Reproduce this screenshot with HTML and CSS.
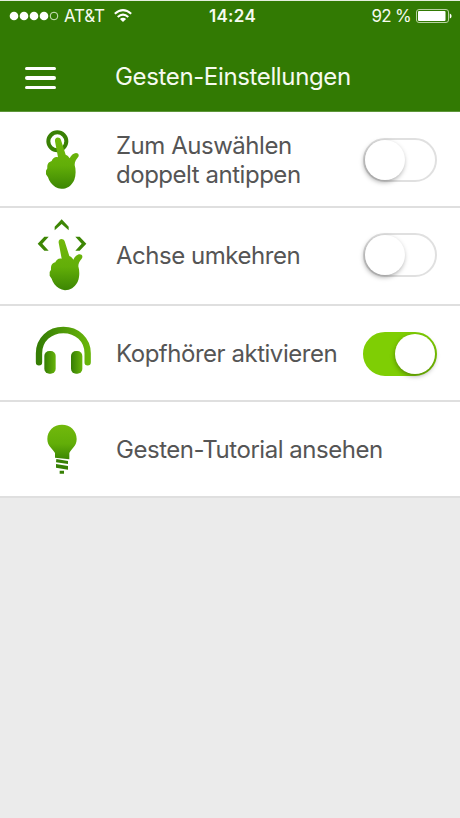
FILE: index.html
```html
<!DOCTYPE html>
<html lang="de">
<head>
<meta charset="UTF-8">
<meta name="viewport" content="width=device-width, initial-scale=1.0">
<title>Gesten-Einstellungen</title>
<link rel="stylesheet" href="styles.css">
</head>
<body>
<header>
    <div class="status-bar">
        <div class="carrier">
            <svg width="50" height="12" viewBox="0 0 50 12" fill="#fff">
                <circle cx="5" cy="6" r="4.3"/>
                <circle cx="15" cy="6" r="4.3"/>
                <circle cx="25" cy="6" r="4.3"/>
                <circle cx="35" cy="6" r="4.3"/>
                <circle cx="45" cy="6" r="3.8" fill="none" stroke="#e4f0d8" stroke-width=".9"/>
            </svg>
            <span>AT&amp;T</span>
            <svg class="wifi" width="18" height="14" viewBox="0 0 18 14" fill="none" stroke="#fff" stroke-width="2">
                <path d="M.8 4.8Q9-2.6 17.2 4.8M3.7 8Q9 3.2 14.3 8"/>
                <path d="M9 13L5.9 9.9Q9 7.5 12.1 9.9Z" fill="#fff" stroke="none"/>
            </svg>
        </div>
        <div class="time">14:24</div>
        <div class="battery">
            <span>92 %</span>
            <svg width="36" height="14" viewBox="0 0 36 14">
                <rect x=".5" y=".5" width="32" height="13" rx="2.5" fill="none" stroke="#b9d3a2"/>
                <rect x="2" y="2" width="27.5" height="10" rx="1" fill="#fff"/>
                <path d="M33.8 4.5Q35.6 5 35.6 7T33.8 9.5Z" fill="#fff"/>
            </svg>
        </div>
    </div>
    <div class="nav-bar">
        <div class="menu"><i></i><i></i><i></i></div>
        <h1>Gesten-Einstellungen</h1>
    </div>
</header>

<ul class="settings">
    <li>
        <svg class="icon" viewBox="0 -9 270 285">
            <defs>
                <linearGradient id="handFill" x1="0" y1="0" x2="0" y2="1">
                    <stop offset="0" stop-color="#72b90c"/>
                    <stop offset=".55" stop-color="#62ae08"/>
                    <stop offset="1" stop-color="#3c8603"/>
                </linearGradient>
                <linearGradient id="sideFill" x1="0" y1="0" x2="1" y2="0">
                    <stop offset="0" stop-color="#357d04"/>
                    <stop offset="1" stop-color="#67b40a"/>
                </linearGradient>
                <path id="hand" d="M105 79C103 66 119 64 123 75L137 119C144 122 147 127 149 130C153 121 161 114 168 114C177 115 178 122 174 127C168 134 164 141 164 150C168 163 168 181 163 194C157 208 145 220 130 221Q116 223 106 216C96 209 87 199 84 187L78 178L78 167L82 160C81 146 86 141 95 138C97 130 106 124 114 127Z"/>
            </defs>
            <circle cx="112" cy="79" r="27" fill="none" stroke="#398004" stroke-width="12"/>
            <use href="#hand" fill="url(#handFill)"/>
        </svg>
        <span class="label">Zum Auswählen<br>doppelt antippen</span>
        <span class="toggle"></span>
    </li>
    <li class="axis">
        <svg class="icon" viewBox="0 -6 270 285">
            <g fill="#3d8604">
                <path d="M125 28L146 50V61L125 42L104 61V50Z"/>
                <path d="M53 101L73 80H86L67 101L86 122H73Z"/>
                <path d="M199 101L179 80H166L185 101L166 122H179Z"/>
            </g>
            <use href="#hand" x="11" y="19" fill="url(#handFill)"/>
        </svg>
        <span class="label">Achse umkehren</span>
        <span class="toggle"></span>
    </li>
    <li>
        <svg class="icon" viewBox="0 -13 270 285">
            <path d="M57 156V129C57 88 89 59 130 59S203 88 203 129V156" fill="none" stroke="url(#sideFill)" stroke-width="19" stroke-linecap="round"/>
            <rect x="73" y="122" width="34" height="68" rx="15" fill="url(#sideFill)"/>
            <rect x="153" y="122" width="34" height="68" rx="15" fill="url(#sideFill)"/>
        </svg>
        <span class="label">Kopfhörer aktivieren</span>
        <span class="toggle on"></span>
    </li>
    <li>
        <svg class="icon" viewBox="0 -24 270 285">
            <path d="M105 143V129C98 116 82 109 82 87C82 62 101 44 126 44S170 62 170 87C170 109 154 116 148 129V148Z" fill="url(#handFill)"/>
            <path d="M109 147L144 153V162L108 157ZM108 162L144 168V179L108 173ZM119 182H132V191H119Z" fill="#378005"/>
        </svg>
        <span class="label">Gesten-Tutorial ansehen</span>
    </li>
</ul>
</body>
</html>
```
FILE: styles.css
```css
* {
    box-sizing: border-box;
}

body {
    margin: 0;
    min-height: 818px;
    background: #ebebeb;
    font-family: Inter, "Liberation Sans", sans-serif;
    color: #555;
}

header {
    height: 112px;
    background: #327a03;
    border-top: 1px solid #e5eedd;
    border-bottom: 1px solid #5d963a;
    color: #f6fbf0;
}

.status-bar {
    display: grid;
    grid-template-columns: 1fr auto 1fr;
    align-items: center;
    height: 30px;
    padding: 0 8px 0 9px;
    font-size: 17px;
    line-height: 30px;
}

.carrier,
.battery {
    display: flex;
    align-items: center;
}

.carrier span {
    margin-left: 5px;
    letter-spacing: -0.2px;
}

.wifi {
    margin-left: 9px;
}

.time {
    padding-left: 4px;
    font-weight: 600;
    letter-spacing: 0.3px;
}

.battery {
    justify-content: flex-end;
    gap: 5px;
}

.battery span {
    letter-spacing: -0.7px;
}

.nav-bar {
    display: flex;
    align-items: center;
    height: 80px;
    padding: 11px 0 0 25px;
}

.menu {
    display: flex;
    flex-direction: column;
    gap: 6px;
    width: 31px;
    margin: 3px 59px 0 0;
}

.menu i {
    height: 3.6px;
    border-radius: 2px;
    background: #fff;
}

h1 {
    margin: 0;
    font-size: 24px;
    font-weight: 400;
    line-height: 30px;
    letter-spacing: -0.36px;
    white-space: nowrap;
}

.settings {
    margin: 0;
    padding: 0;
    list-style: none;
    background: #fff;
}

.settings li {
    display: flex;
    align-items: center;
    height: 96px;
    padding: 1px 23px 0 20px;
    border-bottom: 2px solid #dfdfdf;
}

.settings .axis {
    height: 98px;
    padding-top: 0;
    padding-bottom: 2px;
}

.icon {
    flex: none;
    width: 90px;
    height: 95px;
}

.label {
    margin-left: 6px;
    font-size: 24px;
    line-height: 29px;
    letter-spacing: -0.47px;
    white-space: nowrap;
}

.toggle {
    flex: none;
    display: flex;
    width: 74px;
    height: 44px;
    margin-left: auto;
    border: 2px solid #e0e0e0;
    border-radius: 22px;
}

.toggle::before {
    content: "";
    width: 40px;
    height: 40px;
    border-radius: 50%;
    background: #fff;
    box-shadow: -1px 2px 5px rgba(0, 0, 0, 0.35);
}

.toggle.on {
    justify-content: flex-end;
    background: #7fce04;
    border-color: #7fce04;
}

.toggle.on::before {
    box-shadow: 0 2px 5px rgba(0, 0, 0, 0.35);
}
```
